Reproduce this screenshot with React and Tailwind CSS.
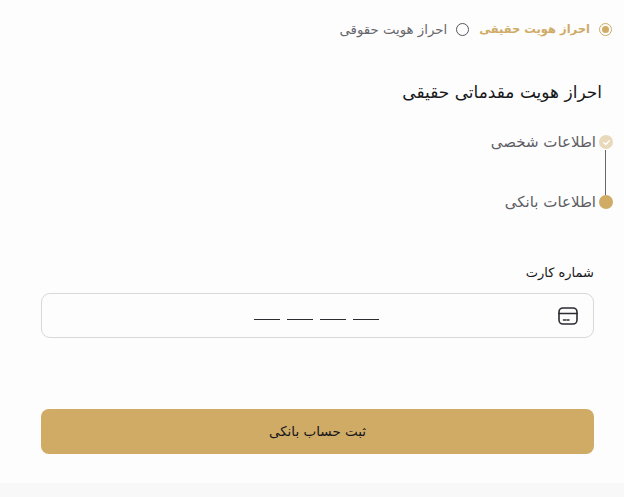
import React from "react";

const font = "font-['DejaVu_Sans',sans-serif]";

const RadioOption = ({ label, active }) => (
  <label className="flex items-center gap-[9px]">
    <span
      className={`flex h-[13px] w-[13px] items-center justify-center rounded-full border-[1.5px] ${
        active ? "border-[#cfab66]" : "border-[#55555c]"
      }`}
    >
      {active && <span className="h-[7px] w-[7px] rounded-full bg-[#cfab66]"></span>}
    </span>
    <span className={active ? "text-[11.5px] font-bold text-[#cfab66]" : "text-[13.3px] text-[#66666c]"}>
      {label}
    </span>
  </label>
);

export default function App() {
  return (
    <div dir="rtl" className={`flex h-[497px] w-[624px] flex-col bg-[#fdfdfd] ${font}`}>
      <div className="flex h-[483px] flex-col pl-[41px] pr-[11px]">
        <div className="mr-[1px] flex h-[60px] items-center gap-[10px] pb-[1px]">
          <RadioOption label="احراز هویت حقیقی" active />
          <RadioOption label="احراز هویت حقوقی" />
        </div>

        <h2 className="mr-[11px] mt-[18px] h-[28px] text-[17px] leading-[28px] text-[#17171a]">
          احراز هویت مقدماتی حقیقی
        </h2>

        {/* steps */}
        <div className="mt-[23px] flex flex-col">
          <div className="flex h-[26px] items-center gap-[3px]">
            <span className="flex h-[14px] w-[14px] items-center justify-center rounded-full bg-[#e8d9ba]">
              <svg width="9" height="9" viewBox="0 0 10 10" fill="none" stroke="#fff" strokeWidth="1.5" strokeLinecap="round" strokeLinejoin="round">
                <path d="M2 5.3 4.2 7.3 8 3" />
              </svg>
            </span>
            <span className="text-[15px] text-[#5e5e64]">اطلاعات شخصی</span>
          </div>
          <div className="mr-[7px] -my-[5px] h-[45px] w-px bg-[#66666c]"></div>
          <div className="flex h-[24px] items-center gap-[3px]">
            <span className="h-[14px] w-[14px] rounded-full bg-[#cfab66]"></span>
            <span className="text-[15px] text-[#5e5e64]">اطلاعات بانکی</span>
          </div>
        </div>

        {/* card number */}
        <div className="mr-[19px] mt-[47px] flex flex-col">
          <span className="h-[24px] text-[13px] leading-[24px] text-[#17171a]">شماره کارت</span>
          <div className="mt-[8px] flex h-[45px] items-center rounded-[9px] border border-[#d8d8d8] pr-[14px]">
            <svg width="22" height="22" viewBox="0 0 22 22" fill="none" stroke="#2b2b30" strokeWidth="1.6" strokeLinecap="round">
              <rect x="2" y="3" width="18" height="16" rx="4" />
              <path d="M2 8.5h18" />
              <path d="M6.5 15h2M10 15h2" />
            </svg>
            <div dir="ltr" className="mr-[178px] flex gap-[7px] pt-[8px]">
              <span className="h-px w-[26px] bg-[#2b2b30]"></span>
              <span className="h-px w-[26px] bg-[#2b2b30]"></span>
              <span className="h-px w-[26px] bg-[#2b2b30]"></span>
              <span className="h-px w-[26px] bg-[#2b2b30]"></span>
            </div>
          </div>
        </div>

        <button className="mr-[19px] mt-[71px] flex h-[45px] items-center justify-center rounded-[8px] bg-[#cfab66] text-[13.5px] text-[#17171a]">
          ثبت حساب بانکی
        </button>
      </div>
      <div className="h-[14px] bg-[#f8f8f8]"></div>
    </div>
  );
}
